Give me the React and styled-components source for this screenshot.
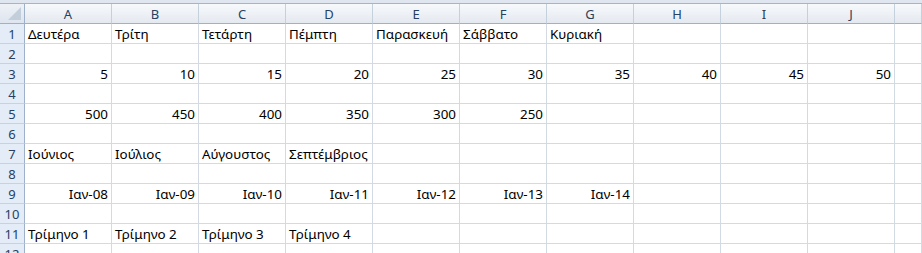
import React from 'react';
import styled, { createGlobalStyle } from 'styled-components';

const GlobalStyle = createGlobalStyle`
  html, body {
    margin: 0;
    padding: 0;
    background: #ffffff;
    overflow: hidden;
  }
`;

const COLS = ['A', 'B', 'C', 'D', 'E', 'F', 'G', 'H', 'I', 'J'];

const Sheet = styled.div`
  width: 922px;
  height: 253px;
  overflow: hidden;
  font-family: "Noto Sans", "Open Sans", sans-serif;
  font-size: 13.4px;
  color: #000;
`;

const TopStrip = styled.div`
  height: 4px;
  background: #dfe6ef;
  border-bottom: 1px solid #a5b5c9;
  box-sizing: border-box;
`;

const Grid = styled.div`
  display: grid;
  grid-template-columns: 25px repeat(10, 87px) 1fr;
  grid-auto-rows: 20px;
`;

const Corner = styled.div`
  position: relative;
  box-sizing: border-box;
  background: linear-gradient(#eef2f7, #dee5ee);
  border-right: 1px solid #9eb1c8;
  border-bottom: 1px solid #9eb1c8;
  &::after {
    content: '';
    position: absolute;
    right: 3px;
    bottom: 3px;
    width: 0;
    height: 0;
    border-left: 13px solid transparent;
    border-bottom: 13px solid #c3cedb;
  }
`;

const ColHead = styled.div`
  box-sizing: border-box;
  background: linear-gradient(#f7f9fb, #e4e9f0);
  border-right: 1px solid #c5d0dd;
  border-bottom: 1px solid #9eb1c8;
  color: #27415f;
  display: flex;
  align-items: center;
  justify-content: center;
  font-size: 13px;
`;

const RowHead = styled.div`
  box-sizing: border-box;
  background: #e4ecf7;
  border-right: 1px solid #9eb1c8;
  border-bottom: 1px solid #c5d2e3;
  color: #27415f;
  display: flex;
  align-items: center;
  justify-content: center;
  font-size: 13px;
`;

const Cell = styled.div`
  box-sizing: border-box;
  border-right: 1px solid #d4dae3;
  border-bottom: 1px solid #d4dae3;
  padding: 0 3px;
  display: flex;
  align-items: center;
  justify-content: ${(p) => (p.$num ? 'flex-end' : 'flex-start')};
  white-space: nowrap;
  overflow: visible;
`;

const data = {
  1: ['Δευτέρα', 'Τρίτη', 'Τετάρτη', 'Πέμπτη', 'Παρασκευή', 'Σάββατο', 'Κυριακή'],
  3: [5, 10, 15, 20, 25, 30, 35, 40, 45, 50],
  5: [500, 450, 400, 350, 300, 250],
  7: ['Ιούνιος', 'Ιούλιος', 'Αύγουστος', 'Σεπτέμβριος'],
  9: ['Ιαν-08', 'Ιαν-09', 'Ιαν-10', 'Ιαν-11', 'Ιαν-12', 'Ιαν-13', 'Ιαν-14'],
  11: ['Τρίμηνο 1', 'Τρίμηνο 2', 'Τρίμηνο 3', 'Τρίμηνο 4'],
};
const numericRows = [3, 5, 9];

export default function App() {
  const rows = [];
  for (let r = 1; r <= 12; r++) {
    const vals = data[r] || [];
    rows.push(<RowHead key={'h' + r}>{r}</RowHead>);
    for (let c = 0; c < 11; c++) {
      rows.push(
        <Cell key={r + '-' + c} $num={numericRows.includes(r)}>
          {vals[c] !== undefined ? vals[c] : ''}
        </Cell>
      );
    }
  }

  return (
    <Sheet>
      <GlobalStyle />
      <TopStrip />
      <Grid>
        <Corner />
        {COLS.map((c) => (
          <ColHead key={c}>{c}</ColHead>
        ))}
        <ColHead />
        {rows}
      </Grid>
    </Sheet>
  );
}
